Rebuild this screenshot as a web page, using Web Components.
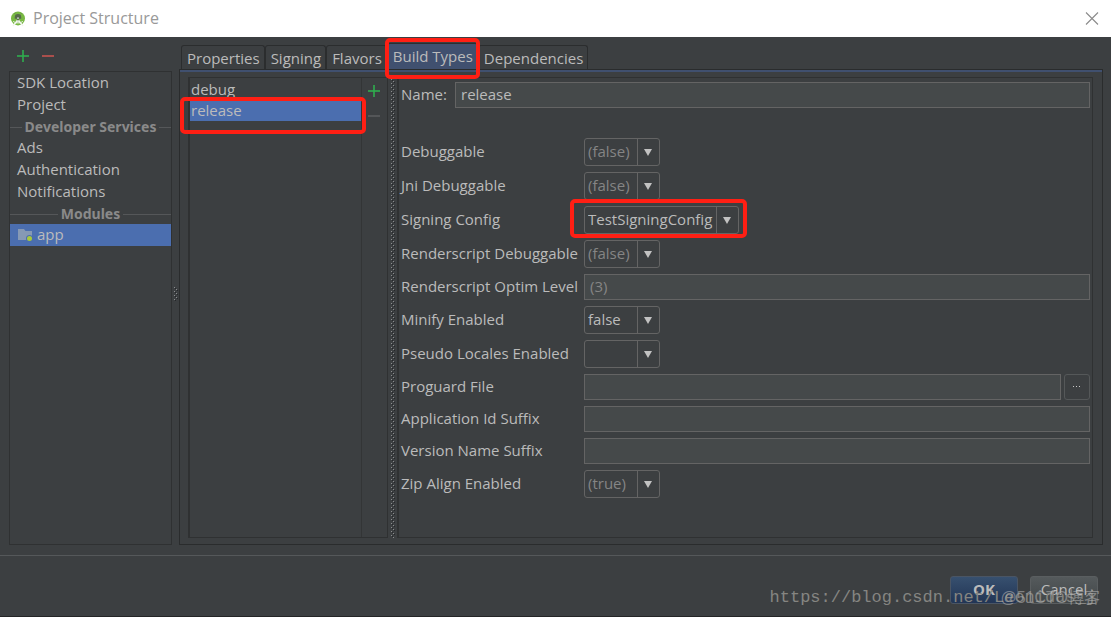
<!DOCTYPE html>
<html lang="en">
<head>
<meta charset="utf-8">
<title>Project Structure</title>
<style>
  html, body { margin: 0; height: 100%; }
  body { background: #3c3f41; color: #bbbbbb; font: 15px/20px "Open Sans", "Noto Sans", sans-serif; }
</style>
</head>
<body>
<project-window></project-window>

<script>
const define = (name, html, setup) => {
  const template = document.createElement("template");
  template.innerHTML = `<style>*{box-sizing:border-box}</style>${html}`;
  customElements.define(name, class extends HTMLElement {
    constructor() {
      super();
      this.attachShadow({ mode: "open" }).append(template.content.cloneNode(true));
    }
    connectedCallback() {
      if (setup && !this.ready) { this.ready = true; setup(this, this.shadowRoot); }
    }
  });
};

/* Red rounded outline laid over the element it calls out */
define("highlight-box", `
  <style>
    :host { position: absolute; z-index: 5; box-sizing: border-box; pointer-events: none;
            inset: var(--inset); border: 4px solid #ff1f14; border-radius: 5px; }
  </style>`);

define("title-bar", `
  <style>
    :host { display: flex; align-items: center; height: 37px; padding: 0 12px 0 10px; gap: 7px;
            background: #fff; color: #999; box-sizing: border-box; }
    h1 { flex: 1; margin: 0; padding-bottom: 2px; font: inherit; font-size: 16px; }
    button { border: 0; background: none; padding: 0; width: 14px; height: 14px; display: grid; }
    svg { display: block; }
  </style>
  <svg width="16" height="16" viewBox="0 0 16 16" aria-hidden="true">
    <circle cx="8" cy="7.4" r="7" fill="#78b843"/>
    <path d="M4.800 6.200a3.200 3.200 0 0 1 6.400 0v1.600H4.800z" fill="#56694b"/>
    <path d="M5.3 3.2l-.8-1M10.7 3.2l.8-1" stroke="#56694b" stroke-width=".6"/>
    <path d="M7.2 6.500h1.600v2l4.800 6-.8.9L8 10.600 3.200 15.400l-.8-.9L7.2 8.500z" fill="#f2f5f0"/>
    <path d="M3.200 10.400c2.600 2 7 2 9.600 0" fill="none" stroke="#f2f5f0"/>
    <circle cx="8" cy="8.600" r="1" fill="#53634b"/>
  </svg>
  <h1><slot></slot></h1>
  <button aria-label="Close"><svg width="14" height="14" viewBox="0 0 14 14"><path d="M1 0.500l12 12M13 0.500L1 12.500" stroke="#8b8b8b" stroke-width="1.1"/></svg></button>`);

define("tool-button", `
  <style>
    :host { display: block; width: 13px; height: 13px; color: #2fae4e; }
    :host([kind=remove]) { color: #c75450; }
    :host([disabled]) { color: #5a5d5e; }
    button { display: block; width: 100%; height: 100%; padding: 0; border: 0; background: none; color: inherit; }
    svg { display: block; }
    :host([kind=remove]) .v { display: none; }
  </style>
  <button><svg width="13" height="13" viewBox="0 0 13 13" fill="currentColor"><path d="M0 5.200h12v1.600H0z"/><path class="v" d="M5.200 0h1.600v12H5.200z"/></svg></button>`,
  (el, root) => {
    const b = root.querySelector("button");
    b.setAttribute("aria-label", el.getAttribute("kind") === "remove" ? "Remove" : "Add");
    b.disabled = el.hasAttribute("disabled");
  });

define("nav-item", `
  <style>
    :host { display: block; }
    a { display: flex; align-items: center; gap: 4px; height: 22px; padding: 0 7px 2px; color: inherit; text-decoration: none; }
    :host([selected]) a { background: #4b6eaf; }
  </style>
  <a href="#"><slot name="icon"></slot><slot></slot></a>`);

define("nav-heading", `
  <style>
    :host { display: flex; align-items: center; gap: 3px; height: 21px; color: #8a8a8a; font-weight: 700; font-size: 14px; font-family: "Noto Sans", sans-serif; }
    :host::before, :host::after { content: ""; flex: 1; border-top: 1px solid #555759; margin-top: 2px; }
  </style>
  <slot></slot>`);

define("module-icon", `
  <style>:host { display: block; padding-top: 2px; } svg { display: block; }</style>
  <svg width="16" height="14" viewBox="0 0 16 14" aria-hidden="true">
    <path d="M1 1h6l1.500 2H15v9H1z" fill="#8699b5"/>
    <circle cx="12.500" cy="10.500" r="3.500" fill="#4b6eaf"/><circle cx="12.500" cy="10.500" r="2.500" fill="#a8c93a"/>
  </svg>`);

define("side-nav", `
  <style>
    :host { display: flex; flex-direction: column; width: 163px; }
    .tools { display: flex; gap: 12px; align-items: center; height: 34px; padding: 4px 8px 0; }
    nav { flex: 1; border: 1px solid #2f3132; }
  </style>
  <div class="tools"><tool-button kind="add"></tool-button><tool-button kind="remove"></tool-button></div>
  <nav>
    <nav-item>SDK Location</nav-item>
    <nav-item>Project</nav-item>
    <nav-heading>Developer Services</nav-heading>
    <nav-item>Ads</nav-item>
    <nav-item>Authentication</nav-item>
    <nav-item>Notifications</nav-item>
    <nav-heading>Modules</nav-heading>
    <nav-item selected><module-icon slot="icon"></module-icon>app</nav-item>
  </nav>`);

/* Dotted grip between two panes */
define("split-grip", `
  <style>
    :host { display: flex; align-items: center; justify-content: center; }
    svg { display: block; width: 4px; height: var(--grip-height, 100%); }
  </style>
  <svg aria-hidden="true">
    <defs><pattern id="dots" width="4" height="4" patternUnits="userSpaceOnUse">
      <path d="M0 0h1v1H0zM2 2h1v1H2z" fill="#8b8d8f"/><path d="M1 1h1v1H1zM3 3h1v1H3z" fill="#25272a"/>
    </pattern></defs>
    <rect width="4" height="100%" fill="url(#dots)"/>
  </svg>`);

define("tab-button", `
  <style>
    :host { display: block; position: relative; }
    button { display: block; height: 24px; padding: 0 4px 0 5px; border: 1px solid #2b2d2e; border-bottom: 0;
             border-radius: 3px 3px 0 0; background: none; color: inherit; font: inherit; white-space: nowrap; }
    :host([selected]) button { height: 26px; padding-bottom: 2px; background: #40506f; }
  </style>
  <button role="tab"><slot></slot></button><slot name="mark"></slot>`,
  (el, root) => root.querySelector("button").setAttribute("aria-selected", el.hasAttribute("selected")));

define("type-list", `
  <style>
    :host { display: grid; grid-template-columns: 1fr 25px; width: 200px; border: 1px solid #2f3132; border-left-width: 2px; }
    ul { margin: 0; padding: 1px 0; list-style: none; border-right: 1px solid #333536; }
    li { position: relative; height: 21px; line-height: 21px; padding: 0 1px; }
    li.on { background: #4b6eaf; }
    .strip { display: flex; flex-direction: column; align-items: center; gap: 12px; padding-top: 7px; }
    highlight-box { --inset: -3px -5px -13px -10px; }
  </style>
  <ul>
    <li>debug</li>
    <li class="on">release<highlight-box></highlight-box></li>
  </ul>
  <div class="strip"><tool-button kind="add"></tool-button><tool-button kind="remove" disabled></tool-button></div>`);

define("form-field", `
  <style>
    :host { display: grid; grid-template-columns: var(--label-width, 183px) 1fr; align-items: center; }
    label { white-space: nowrap; padding-bottom: 2px; }
    .control { display: flex; gap: 3px; }
    .combo { position: relative; display: grid; width: var(--combo-width, 76px); }
    select, input { appearance: none; width: 100%; margin: 0; color: inherit; font: inherit; outline: 0; }
    select { height: 28px; padding: 0 22px 2px 3px; border: 1px solid #646464; border-radius: 3px; background: #3c3f41; }
    .arrow { position: absolute; inset: 1px 1px 1px auto; width: 22px; padding-right: 2px; border-left: 1px solid #646464; display: grid; place-items: center; pointer-events: none; }
    input { height: 26px; padding: 0 5px 2px; border: 1px solid #646464; border-radius: 0; background: #45494a; }
    .browse { flex: none; width: 26px; height: 26px; padding: 0; border: 1px solid #555859; border-radius: 3px; background: none; color: inherit; display: grid; place-items: center; }
    :host([muted]) select, :host([muted]) input { color: #858585; }
  </style>
  <label for="control"></label><div class="control"></div>`,
  (el, root) => {
    root.querySelector("label").textContent = el.getAttribute("label");
    const box = root.querySelector(".control");
    const value = el.getAttribute("value") || "";
    if (el.getAttribute("kind") === "combo") {
      box.innerHTML = `<div class="combo"><select id="control"><option></option></select>
        <span class="arrow"><svg width="8" height="7" viewBox="0 0 8 7"><path d="M0 0h8L4 7z" fill="#c2c2c2"/></svg></span><slot></slot></div>`;
      box.querySelector("option").textContent = value;
    } else {
      box.innerHTML = `<input id="control" type="text">`;
      box.firstChild.value = value;
      if (el.hasAttribute("browse"))
        box.insertAdjacentHTML("beforeend", `<button class="browse" aria-label="Browse"><svg width="10" height="2" viewBox="0 0 10 2"><path d="M1 0h1v1H1zM4 0h1v1H4zM7 0h1v1H7z" fill="#c8c8c8"/></svg></button>`);
    }
  });

define("build-form", `
  <style>
    :host { display: block; flex: 1; border: 1px solid #2f3132; border-left-width: 2px; }
    form { display: flex; flex-direction: column; gap: 6px; padding: 4px 2px; }
    .name { --label-width: 54px; margin-bottom: 24px; }
    .signing { --combo-width: 155px; }
    highlight-box { --inset: -7px -8px -4px -14px; }
  </style>
  <form>
    <form-field class="name" label="Name:" value="release"></form-field>
    <form-field kind="combo" label="Debuggable" value="(false)" muted></form-field>
    <form-field kind="combo" label="Jni Debuggable" value="(false)" muted></form-field>
    <form-field kind="combo" class="signing" label="Signing Config" value="TestSigningConfig"><highlight-box></highlight-box></form-field>
    <form-field kind="combo" label="Renderscript Debuggable" value="(false)" muted></form-field>
    <form-field label="Renderscript Optim Level" value="(3)" muted></form-field>
    <form-field kind="combo" label="Minify Enabled" value="false"></form-field>
    <form-field kind="combo" label="Pseudo Locales Enabled"></form-field>
    <form-field label="Proguard File" browse></form-field>
    <form-field label="Application Id Suffix"></form-field>
    <form-field label="Version Name Suffix"></form-field>
    <form-field kind="combo" label="Zip Align Enabled" value="(true)" muted></form-field>
  </form>`);

define("module-editor", `
  <style>
    :host { display: flex; flex-direction: column; flex: 1; min-width: 0; }
    .tabs { display: flex; align-items: flex-end; height: 32px; padding: 0 2px; }
    .panel { flex: 1; display: flex; padding: 5px 9px 6px 8px; border: 1px solid #2a2c2d; box-shadow: inset 0 2px #40506f; }
    split-grip { width: 9px; }
    type-list, build-form { margin-top: 2px; }
    highlight-box { --inset: -5px -2px -10px -2px; }
  </style>
  <div class="tabs" role="tablist">
    <tab-button>Properties</tab-button>
    <tab-button>Signing</tab-button>
    <tab-button>Flavors</tab-button>
    <tab-button selected>Build Types<highlight-box slot="mark"></highlight-box></tab-button>
    <tab-button>Dependencies</tab-button>
  </div>
  <div class="panel"><type-list></type-list><split-grip></split-grip><build-form></build-form></div>`);

define("dialog-button", `
  <style>
    :host { display: block; }
    button { display: block; width: 68px; height: 28px; padding: 0 0 2px; border: 1px solid #5a5e60; border-radius: 3px;
             background: linear-gradient(#555a5c, #414648); color: inherit; font: inherit; }
    :host([primary]) button { background: linear-gradient(#37506f, #223555); border-color: #4a5564; font-weight: 700; }
  </style>
  <button><slot></slot></button>`);

define("dialog-footer", `
  <style>
    :host { position: relative; display: flex; justify-content: flex-end; gap: 12px; height: 62px; padding: 20px 13px 0;
            border-top: 1px solid #55585a; border-bottom: 1px solid #242526; box-sizing: border-box; }
    .mark { position: absolute; white-space: nowrap; pointer-events: none; }
    .url { right: 15px; bottom: 8px; color: #858581; font: 17px/20px "Liberation Mono", monospace; }
    .site { right: 11px; bottom: 8px; color: #b4b4b4; opacity: .55; font: 16px/20px "Liberation Sans", "Noto Sans CJK SC", sans-serif; }
  </style>
  <dialog-button primary>OK</dialog-button><dialog-button>Cancel</dialog-button>
  <span class="mark url">https://blog.csdn.net/Leonidas_j</span>
  <span class="mark site">@51CTO博客</span>`);

define("project-window", `
  <style>
    :host { display: flex; flex-direction: column; min-height: 100vh; }
    main { flex: 1; display: flex; padding: 0 8px 10px 9px; }
    main > split-grip { width: 7px; padding-top: 6px; --grip-height: 14px; }
  </style>
  <title-bar>Project Structure</title-bar>
  <main><side-nav></side-nav><split-grip></split-grip><module-editor></module-editor></main>
  <dialog-footer></dialog-footer>`);
</script>
</body>
</html>
